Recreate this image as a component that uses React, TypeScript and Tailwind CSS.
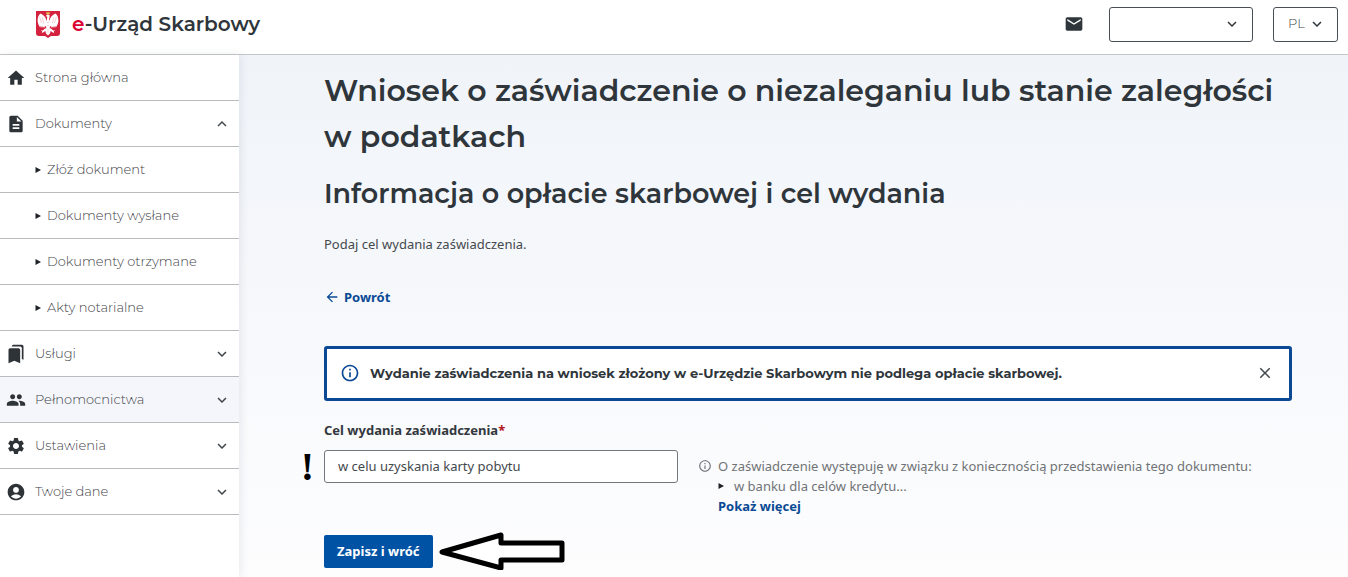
import React, { useState } from 'react';
import type { IconType } from 'react-icons';
import {
    MdAccountCircle,
    MdArrowBack,
    MdBookmarks,
    MdClose,
    MdDescription,
    MdExpandLess,
    MdExpandMore,
    MdHome,
    MdInfoOutline,
    MdMail,
    MdPeople,
    MdSettings,
} from 'react-icons/md';

interface NavItem {
    label: string;
    icon: IconType;
    expandable?: boolean;
    active?: boolean;
    children?: string[];
}

const navItems: NavItem[] = [
    { label: 'Strona główna', icon: MdHome },
    {
        label: 'Dokumenty',
        icon: MdDescription,
        expandable: true,
        children: ['Złóż dokument', 'Dokumenty wysłane', 'Dokumenty otrzymane', 'Akty notarialne'],
    },
    { label: 'Usługi', icon: MdBookmarks, expandable: true },
    { label: 'Pełnomocnictwa', icon: MdPeople, expandable: true, active: true },
    { label: 'Ustawienia', icon: MdSettings, expandable: true },
    { label: 'Twoje dane', icon: MdAccountCircle, expandable: true },
];

const Triangle: React.FC<{ className?: string }> = ({ className }) => (
    <svg viewBox="0 0 6 6" className={className} fill="#1f2328" aria-hidden="true">
        <path d="M0.5 0L6 3L0.5 6Z" />
    </svg>
);

const Emblem: React.FC = () => (
    <svg viewBox="0 0 24 27" className="h-[27px] w-6" aria-hidden="true">
        <path d="M0 0H24V22Q24 25 21 25H15L12 27L9 25H3Q0 25 0 22Z" fill="#d4213d" />
        {/* Wings */}
        <path
            d="M10.5 9.5C10 6.5 7.5 4 4.6 2.6C2.6 4 1.4 7 1.6 10C1.8 12.6 2.8 14.6 4.2 16.4L4.9 14.8L6 17L6.8 15.2L8.2 17L9 15L10.4 15.6Z"
            fill="#fff"
        />
        <path
            d="M13.5 9.5C14 6.5 16.5 4 19.4 2.6C21.4 4 22.6 7 22.4 10C22.2 12.6 21.2 14.6 19.8 16.4L19.1 14.8L18 17L17.2 15.2L15.8 17L15 15L13.6 15.6Z"
            fill="#fff"
        />
        {/* Body, head and tail */}
        <path
            d="M9.6 5.2L11.2 3.6Q12.4 3 13.4 4Q14 5 13.4 6.4L13 8.6Q15 10.5 14.6 14L13.6 17L14.8 19.6L14 22.6L12 24.4L10 22.6L9.2 19.6L10.4 17L9.4 14Q9 10.5 11 8.6L11.2 5.6Z"
            fill="#fff"
        />
        <path
            d="M10 17L6.5 19.5L4.8 19.6L6.2 20.6L5.8 22L7.6 21.2L10.5 19ZM14 17L17.5 19.5L19.2 19.6L17.8 20.6L18.2 22L16.4 21.2L13.5 19Z"
            fill="#fff"
        />
        <path d="M10.4 3.2L10 1L11.2 1.8L12 0.6L12.8 1.8L14 1L13.6 3.2Z" fill="#e8c04a" />
        <path
            d="M3.6 6L5.6 12M6.4 6.5L7.6 12.5M20.4 6L18.4 12M17.6 6.5L16.4 12.5M11 11L12 12L13 11M11 14L12 15L13 14M12 18V22"
            stroke="#eba0ad"
            strokeWidth="0.5"
            fill="none"
        />
    </svg>
);

const Header: React.FC = () => (
    <header className="flex h-[55px] items-center justify-between border-b border-[#c4c6c8] bg-white pr-[10px] pl-9">
        <a href="#" className="flex items-center gap-3 pb-[6px]">
            <Emblem />
            <span className="text-[20px] leading-6 font-semibold">
                <span className="text-[#dc0032]">e</span>-Urząd Skarbowy
            </span>
        </a>
        <div className="flex items-center pb-[6px]">
            <button type="button" aria-label="Wiadomości" className="mr-[25px]">
                <MdMail className="size-5" />
            </button>
            <div className="relative mr-5">
                <select
                    aria-label="Użytkownik"
                    className="block h-[35px] w-36 appearance-none rounded-[3px] border border-[#4a4f55] bg-white px-3"
                >
                    <option value=""></option>
                </select>
                <MdExpandMore className="pointer-events-none absolute top-2 right-3 size-[18px]" />
            </div>
            <div className="relative">
                <select
                    aria-label="Język"
                    defaultValue="PL"
                    className="block h-[35px] w-[65px] appearance-none rounded-[3px] border border-[#4a4f55] bg-white px-[14px] text-[13px] font-light text-[#44494d]"
                >
                    <option value="PL">PL</option>
                    <option value="EN">EN</option>
                </select>
                <MdExpandMore className="pointer-events-none absolute top-2 right-3 size-[18px]" />
            </div>
        </div>
    </header>
);

const Sidebar: React.FC = () => {
    const [open, setOpen] = useState('Dokumenty');

    return (
        <nav className="z-10 w-[239px] shrink-0 bg-white text-[#3f4449] shadow-[2px_0_8px_rgba(60,70,100,0.1)]">
            <ul className="text-[13px] font-light">
                {navItems.map(item => {
                    const Icon = item.icon;
                    const isOpen = open === item.label;
                    return (
                        <li key={item.label}>
                            <button
                                type="button"
                                onClick={() => setOpen(isOpen ? '' : item.label)}
                                className={`flex h-[46px] w-full items-center border-b border-[#b9bbbe] pr-2 pl-[6px] text-left ${item.active ? 'bg-[#f4f6fb]' : ''}`}
                            >
                                <Icon className="mr-[9px] size-5 text-[#2e3338]" />
                                <span className="flex-1">{item.label}</span>
                                {item.expandable &&
                                    (isOpen ? <MdExpandLess className="size-[18px]" /> : <MdExpandMore className="size-[18px]" />)}
                            </button>
                            {isOpen && item.children && (
                                <ul>
                                    {item.children.map(child => (
                                        <li key={child}>
                                            <a
                                                href="#"
                                                className="flex h-[46px] items-center gap-[6px] border-b border-[#b9bbbe] pl-[35px]"
                                            >
                                                <Triangle className="size-[6px]" />
                                                {child}
                                            </a>
                                        </li>
                                    ))}
                                </ul>
                            )}
                        </li>
                    );
                })}
            </ul>
        </nav>
    );
};

export default function App() {
    const [purpose, setPurpose] = useState('w celu uzyskania karty pobytu');
    const [showInfo, setShowInfo] = useState(true);

    return (
        <div className="flex min-h-screen flex-col bg-white font-['Montserrat','Inter',sans-serif] text-[#2f363b]">
            <Header />
            <div className="flex flex-1">
                <Sidebar />
                <main className="flex-1 bg-linear-to-b from-[#f0f4f9] to-[#fdfdfe] pt-[13px] pr-14 pb-1 pl-[85px]">
                    <h1 className="text-[30px] leading-[46px] font-semibold">
                        Wniosek o zaświadczenie o niezaleganiu lub stanie zaległości w podatkach
                    </h1>
                    <h2 className="mt-[15px] text-[27px] leading-[38px] font-semibold">
                        Informacja o opłacie skarbowej i cel wydania
                    </h2>

                    <div className="font-['Noto_Sans',sans-serif] text-[13px] leading-5 text-[#44494d]">
                        <p className="mt-[21px]">Podaj cel wydania zaświadczenia.</p>
                        <a href="#" className="mt-[33px] flex w-fit items-center gap-1 font-bold text-[#0a4a94]">
                            <MdArrowBack className="size-4" />
                            Powrót
                        </a>

                        {showInfo && (
                            <div className="mt-[39px] flex h-[55px] items-center rounded-[3px] border-3 border-[#0b4896] bg-white pr-[15px] pb-[2px] pl-[13px]">
                                <MdInfoOutline className="mr-[10px] size-5 text-[#0b4896]" />
                                <p className="flex-1 font-['Montserrat','Inter',sans-serif] font-bold text-[#2f363b]">
                                    Wydanie zaświadczenia na wniosek złożony w e-Urzędzie Skarbowym nie podlega opłacie skarbowej.
                                </p>
                                <button type="button" aria-label="Zamknij" onClick={() => setShowInfo(false)}>
                                    <MdClose className="size-[18px]" />
                                </button>
                            </div>
                        )}

                        <form onSubmit={e => e.preventDefault()}>
                            <label htmlFor="purpose" className="mt-[19px] block font-bold text-[#33383e]">
                                Cel wydania zaświadczenia<span className="text-[#b3131b]">*</span>
                            </label>
                            <div className="mt-[10px] grid grid-cols-[354fr_594fr] gap-5">
                                <div className="relative">
                                    <input
                                        id="purpose"
                                        type="text"
                                        value={purpose}
                                        onChange={e => setPurpose(e.target.value)}
                                        className="block h-[33px] w-full rounded-[3px] border border-[#73777c] bg-white px-[13px] pb-[2px]"
                                    />
                                    <span className="absolute top-0 right-full mr-[10px] font-['Liberation_Serif',serif] text-[40px] leading-[33px] font-bold text-black">
                                        !
                                    </span>
                                </div>
                                <div className="flex pt-[6px] text-[#707376]">
                                    <MdInfoOutline className="mt-[3px] mr-[6px] size-[14px] shrink-0" />
                                    <div>
                                        <p>O zaświadczenie występuję w związku z koniecznością przedstawienia tego dokumentu:</p>
                                        <ul>
                                            <li className="flex items-center gap-[10px]">
                                                <Triangle className="size-[6px]" />
                                                w banku dla celów kredytu...
                                            </li>
                                        </ul>
                                        <a href="#" className="font-bold text-[#0a4a94]">
                                            Pokaż więcej
                                        </a>
                                    </div>
                                </div>
                            </div>
                            <div className="mt-4 flex items-center gap-[5px]">
                                <button type="submit" className="h-[33px] rounded-[2px] bg-[#0052a5] px-[13px] font-bold text-white">
                                    Zapisz i wróć
                                </button>
                                <svg
                                    viewBox="0 0 128 38"
                                    className="h-[38px] w-32"
                                    fill="#fff"
                                    stroke="#000"
                                    strokeWidth="5"
                                    strokeLinejoin="round"
                                    aria-hidden="true"
                                >
                                    <path d="M4 20L63 3V11H124V28H63V36Z" />
                                </svg>
                            </div>
                        </form>
                    </div>
                </main>
            </div>
        </div>
    );
}
